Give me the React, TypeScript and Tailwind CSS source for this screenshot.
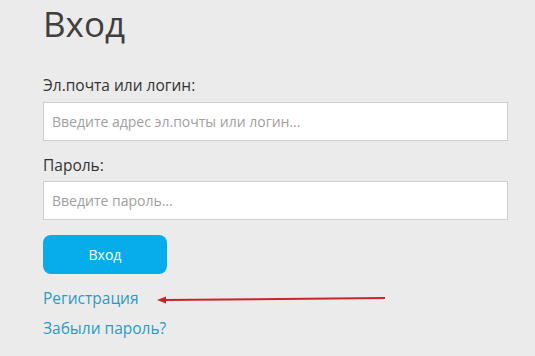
import React from "react";

export default function App() {
  return (
    <div
      className="relative w-[535px] h-[356px] bg-[#ebebeb] overflow-hidden pl-[43px]"
      style={{ fontFamily: '"Open Sans", "Noto Sans", sans-serif' }}
    >
      <div className="flex flex-col w-[465px]">
        <h1 className="pt-[4px] text-[35px] leading-[40px] text-[#3f3f3f] font-normal">Вход</h1>
        <label className="mt-[31px] text-[15.5px] leading-[20px] text-[#333]">Эл.почта или логин:</label>
        <input
          className="mt-[7px] h-[39px] w-[465px] bg-white border border-[#cfcfcf] px-[8px] text-[14px] text-[#333] placeholder:text-[#a0a0a0] outline-none"
          placeholder="Введите адрес эл.почты или логин..."
        />
        <label className="mt-[14px] text-[15.5px] leading-[20px] text-[#333]">Пароль:</label>
        <input
          type="password"
          className="mt-[6px] h-[39px] w-[465px] bg-white border border-[#cfcfcf] px-[8px] text-[14px] text-[#333] placeholder:text-[#a0a0a0] outline-none"
          placeholder="Введите пароль..."
        />
        <button className="mt-[15px] h-[39px] w-[124px] rounded-[8px] bg-[#07adeb] text-white text-[14px] flex items-center justify-center">
          Вход
        </button>
        <a className="mt-[14px] text-[15.5px] leading-[20px] text-[#2b9bc3] self-start">Регистрация</a>
        <a className="mt-[10px] text-[15.5px] leading-[20px] text-[#2b9bc3] self-start">Забыли пароль?</a>
      </div>
      <svg className="absolute left-0 top-0" width="535" height="356" viewBox="0 0 535 356">
        <line x1="385" y1="298" x2="164" y2="300" stroke="#c8252a" strokeWidth="2" />
        <polygon points="157,300.1 166,296.6 166,303.4" fill="#c8252a" />
      </svg>
    </div>
  );
}
